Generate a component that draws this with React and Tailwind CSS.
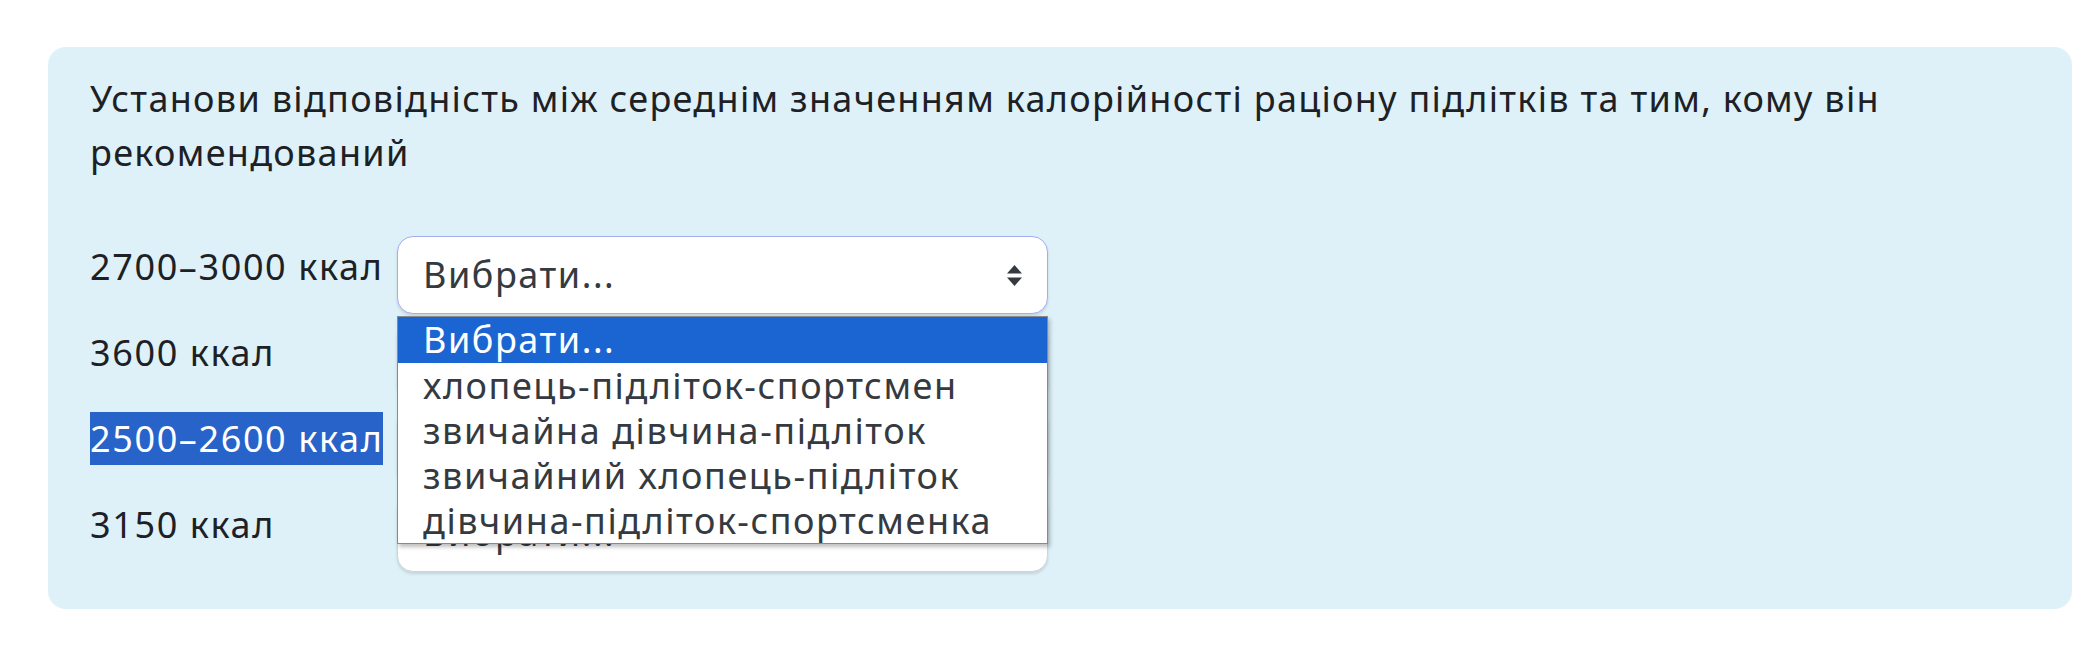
import { useState } from 'react'

const rows = [
  { id: 1, label: '2700–3000 ккал' },
  { id: 2, label: '3600 ккал' },
  { id: 3, label: '2500–2600 ккал', selected: true },
  { id: 4, label: '3150 ккал' },
]

const options = [
  'Вибрати...',
  'хлопець-підліток-спортсмен',
  'звичайна дівчина-підліток',
  'звичайний хлопець-підліток',
  'дівчина-підліток-спортсменка',
]

function SortIcon() {
  return (
    <svg width="17" height="23" viewBox="0 0 17 23" className="text-[#343a40]">
      <path d="M8.5 1 L16 9.5 H1 Z" fill="currentColor" />
      <path d="M8.5 22 L16 13.5 H1 Z" fill="currentColor" />
    </svg>
  )
}

function OptionList() {
  return (
    <ul className="absolute left-0 top-[80px] z-10 w-full border border-[#8a8a8a] bg-white shadow-[2px_3px_4px_rgba(0,0,0,0.25)]">
      {options.map((option, index) => (
        <li
          className={`pl-[25px] text-[36px] leading-[45px] tracking-[0.043em] ${
            index === 0 ? 'h-[46px] bg-[#1b65d3] text-white' : 'h-[45px] text-[#343a40]'
          }`}
          key={option}
        >
          {option}
        </li>
      ))}
    </ul>
  )
}

function ChoiceSelect({ isOpen, isFocused }) {
  return (
    <div className="relative">
      <div
        className={`flex h-[78px] w-[651px] items-center justify-between rounded-[16px] border bg-white pl-[25px] pr-[24px] shadow-[0_2px_3px_rgba(0,0,0,0.12)] ${
          isFocused ? 'border-[#a3adf3]' : 'border-[#cfd4da]'
        }`}
      >
        <span className="text-[36px] tracking-[0.043em] text-[#343a40]">Вибрати...</span>
        <SortIcon />
      </div>
      {isOpen && <OptionList />}
    </div>
  )
}

export default function App() {
  const [openRow] = useState(1)

  return (
    <div
      className="min-h-screen bg-white pl-[48px] pr-[6px] pt-[47px]"
      style={{ fontFamily: '"Noto Sans", "Open Sans", sans-serif' }}
    >
      <div className="rounded-[18px] bg-[#def1f8] pb-[37px] pl-[42px] pr-[40px] pt-[25px]">
        <p className="text-[36px] leading-[54px] tracking-[0.036em] text-[#1d2125]">
          Установи відповідність між середнім значенням калорійності раціону підлітків та тим, кому він
          рекомендований
        </p>

        <div className="mt-[56px] flex flex-col gap-[8px]">
          {rows.map((row) => (
            <div className="flex items-start" key={row.id}>
              <div className="w-[307px] pt-[4px]">
                <span
                  className={`inline-block text-[36px] leading-[53px] tracking-[0.045em] ${
                    row.selected ? 'bg-[#2763c9] text-white' : 'text-[#1d2125]'
                  }`}
                >
                  {row.label}
                </span>
              </div>
              <ChoiceSelect isFocused={row.id === openRow} isOpen={row.id === openRow} />
            </div>
          ))}
        </div>
      </div>
    </div>
  )
}
